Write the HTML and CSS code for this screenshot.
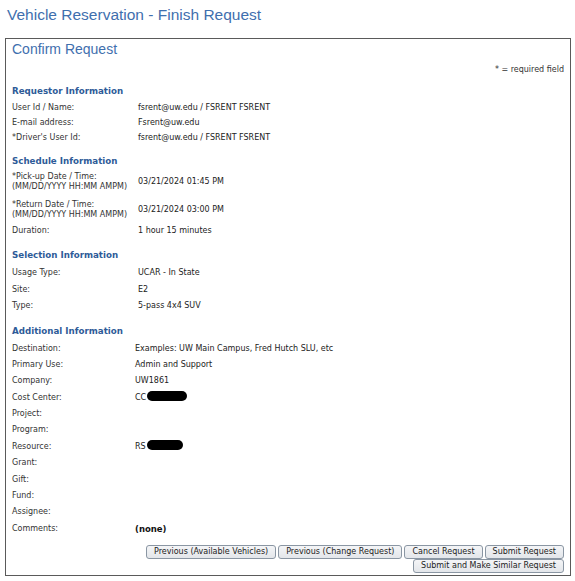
FILE: index.html
```html
<!DOCTYPE html>
<html>
<head>
<meta charset="utf-8">
<link rel="stylesheet" href="styles.css">
</head>
<body>
<h1 class="page-title">Vehicle Reservation - Finish Request</h1>
<div class="panel">
  <h2 class="panel-title">Confirm Request</h2>
  <div class="required-note">* = required field</div>

  <div class="section-head first">Requestor Information</div>
  <div class="rows rows-a">
    <div class="row"><span class="lbl">User Id / Name:</span><span class="val">fsrent@uw.edu / FSRENT FSRENT</span></div>
    <div class="row"><span class="lbl">E-mail address:</span><span class="val">Fsrent@uw.edu</span></div>
    <div class="row"><span class="lbl">*Driver's User Id:</span><span class="val">fsrent@uw.edu / FSRENT FSRENT</span></div>
  </div>

  <div class="section-head sched">Schedule Information</div>
  <div class="rows rows-s">
    <div class="row tall"><span class="lbl">*Pick-up Date / Time:<br>(MM/DD/YYYY HH:MM AMPM)</span><span class="val">03/21/2024 01:45 PM</span></div>
    <div class="row tall"><span class="lbl">*Return Date / Time:<br>(MM/DD/YYYY HH:MM AMPM)</span><span class="val">03/21/2024 03:00 PM</span></div>
    <div class="row short"><span class="lbl">Duration:</span><span class="val">1 hour 15 minutes</span></div>
  </div>

  <div class="section-head sel">Selection Information</div>
  <div class="rows rows-b">
    <div class="row"><span class="lbl">Usage Type:</span><span class="val">UCAR - In State</span></div>
    <div class="row"><span class="lbl">Site:</span><span class="val">E2</span></div>
    <div class="row"><span class="lbl">Type:</span><span class="val">5-pass 4x4 SUV</span></div>
  </div>

  <div class="section-head add">Additional Information</div>
  <div class="rows rows-c">
    <div class="row"><span class="lbl">Destination:</span><span class="val">Examples: UW Main Campus, Fred Hutch SLU, etc</span></div>
    <div class="row"><span class="lbl">Primary Use:</span><span class="val">Admin and Support</span></div>
    <div class="row"><span class="lbl">Company:</span><span class="val">UW1861</span></div>
    <div class="row"><span class="lbl">Cost Center:</span><span class="val">CC<span class="redact r1"></span></span></div>
    <div class="row"><span class="lbl">Project:</span><span class="val"></span></div>
    <div class="row"><span class="lbl">Program:</span><span class="val"></span></div>
    <div class="row"><span class="lbl">Resource:</span><span class="val">RS<span class="redact r2"></span></span></div>
    <div class="row"><span class="lbl">Grant:</span><span class="val"></span></div>
    <div class="row"><span class="lbl">Gift:</span><span class="val"></span></div>
    <div class="row"><span class="lbl">Fund:</span><span class="val"></span></div>
    <div class="row"><span class="lbl">Assignee:</span><span class="val"></span></div>
    <div class="row"><span class="lbl">Comments:</span><span class="val strong">(none)</span></div>
  </div>

  <div class="actions">
    <div class="btn-row">
      <button class="btn">Previous (Available Vehicles)</button>
      <button class="btn">Previous (Change Request)</button>
      <button class="btn">Cancel Request</button>
      <button class="btn">Submit Request</button>
    </div>
    <div class="btn-row">
      <button class="btn">Submit and Make Similar Request</button>
    </div>
  </div>
</div>
</body>
</html>
```
FILE: styles.css
```css
html, body {
  margin: 0;
  padding: 0;
  background: #ffffff;
}
body {
  font-family: "DejaVu Sans", Verdana, sans-serif;
  font-size: 8px;
  color: #333333;
}
.page-title {
  margin: 0;
  padding: 6px 0 0 7px;
  height: 32px;
  box-sizing: border-box;
  font-family: "Liberation Sans", Arial, sans-serif;
  font-weight: normal;
  font-size: 15.5px;
  line-height: 18px;
  color: #3f6fae;
}
.panel {
  margin: 6px 0 0 5px;
  width: 566px;
  height: 538px;
  box-sizing: border-box;
  border: 1px solid #5a5a5a;
  padding: 0 6px 0 6px;
}
.panel-title {
  margin: 0;
  padding-top: 1px;
  font-family: "Liberation Sans", Arial, sans-serif;
  font-weight: normal;
  font-size: 14px;
  line-height: 18px;
  color: #3f6fae;
}
.required-note {
  text-align: right;
  line-height: 10px;
  margin-top: 7px;
}
.section-head {
  font-weight: bold;
  font-size: 8.7px;
  line-height: 12px;
  color: #2e5b98;
}
.section-head.first { margin-top: 10px; }
.section-head.sched { margin-top: 10px; }
.section-head.sel { margin-top: 12px; }
.section-head.add { margin-top: 10px; }
.rows {
  display: flex;
  flex-direction: column;
}
.rows-a { margin-top: 3px; }
.rows-s { margin-top: 1px; }
.rows-b { margin-top: 4px; }
.rows-c { margin-top: 4px; }
.row {
  display: grid;
  grid-template-columns: 126px 1fr;
  align-items: center;
  line-height: 10px;
}
.rows-a .row { height: 15px; }
.rows-b .row { height: 16.5px; }
.rows-c .row { height: 16.36px; grid-template-columns: 123px 1fr; }
.rows-s .row.tall { height: 28px; }
.rows-s .row.short { height: 13px; }
.val { color: #222222; }
.val.strong { font-weight: bold; font-size: 8.5px; color: #111; }
.redact {
  display: inline-block;
  vertical-align: middle;
  height: 10px;
  background: #000;
  border-radius: 5px;
  margin-top: -2px;
}
.r1 { width: 40px; margin-left: 1px; }
.r2 { width: 36px; margin-left: 1px; }
.actions {
  margin-top: 8px;
  display: flex;
  flex-direction: column;
  align-items: flex-end;
  padding-right: 0;
}
.btn-row {
  display: flex;
  gap: 2px;
}
.btn {
  font-family: "DejaVu Sans", Verdana, sans-serif;
  font-size: 8px;
  color: #222;
  height: 14px;
  line-height: 12px;
  padding: 0 7px;
  margin: 0;
  background: linear-gradient(#f4f5f7, #e3e6ea);
  border: 1px solid #8a96a3;
  border-radius: 3px;
}
```
